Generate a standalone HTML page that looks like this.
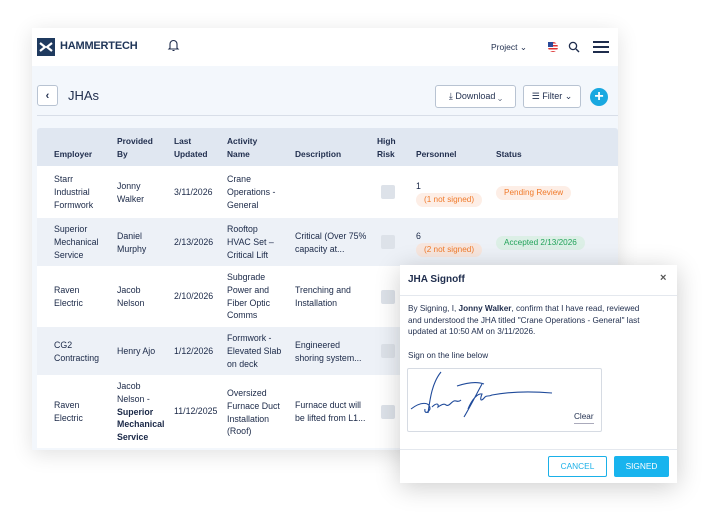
<!DOCTYPE html>
<html><head><style>
*{box-sizing:border-box;margin:0;padding:0}
body{width:709px;height:519px;background:#fff;font-family:"Liberation Sans",sans-serif;color:#1f2d4d;position:relative;overflow:hidden;font-size:8.6px}
.card{position:absolute;left:32px;top:28px;width:586px;height:422px;background:#f3f7fc;box-shadow:0 4px 20px rgba(0,0,0,.12);overflow:hidden}
.hdr{position:absolute;left:0;top:0;width:586px;height:38px;background:#fff}
.abs{position:absolute}
.btn{position:absolute;border:1px solid #b8c3d2;border-radius:3px;background:#fff;font-size:9px;display:flex;align-items:center;justify-content:center;gap:4px}
.th{position:absolute;top:100px;left:5px;width:581px;height:38px;background:#e0e7f1;border-radius:3px 3px 0 0}
.th span{position:absolute;font-weight:bold;font-size:8.4px;line-height:12.5px}
.row{position:absolute;left:5px;width:581px}
.c{position:absolute;line-height:12.8px;font-size:8.8px;color:#1a2847}
.cb{position:absolute;left:344px;width:14px;height:14px;background:#dde2e9;border-radius:2px}
.pill{position:absolute;border-radius:8px;font-size:8.2px;padding:2px 8px;line-height:10px}
.modal{position:absolute;left:400px;top:265px;width:277px;height:218px;background:#fff;box-shadow:0 4px 24px rgba(0,0,0,.2)}
</style></head><body>
<div class="card">
 <div class="hdr">
  <svg class="abs" style="left:5px;top:10px" width="18" height="18" viewBox="0 0 18 18"><rect width="18" height="18" fill="#1f3a5f"/><path d="M3 5l5 4-5 4M15 5l-5 4 5 4" stroke="#fff" stroke-width="2.2" fill="none"/></svg>
  <div class="abs" style="left:28px;top:12px;font-weight:bold;font-size:11px;color:#1f3558;letter-spacing:-.2px">HAMMERTECH</div>
  <svg class="abs" style="left:135px;top:10px" width="13" height="14" viewBox="0 0 13 14"><path d="M3 10V6a3.5 3.5 0 017 0v4l1 1H2z M5.5 12.5h2" stroke="#1f2d4d" stroke-width="1.1" fill="none"/></svg>
  <div class="abs" style="left:459px;top:14px;font-size:8.5px">Project ⌄</div>
  <div class="abs" style="left:516px;top:14px;width:10px;height:10px;border-radius:50%;background:repeating-linear-gradient(#d33 0 1.5px,#fff 1.5px 3px)"><div style="width:5px;height:5px;background:#2a4a9a"></div></div>
  <svg class="abs" style="left:536px;top:13px" width="12" height="12"><circle cx="5" cy="5" r="3.6" stroke="#1f2d4d" stroke-width="1.3" fill="none"/><path d="M8 8l3 3" stroke="#1f2d4d" stroke-width="1.4"/></svg>
  <div class="abs" style="left:561px;top:13px;width:16px;height:12px;border-top:2px solid #1f2d4d;border-bottom:2px solid #1f2d4d"><div style="margin-top:3px;height:2px;background:#1f2d4d"></div></div>
 </div>
 <div class="btn" style="left:5px;top:57px;width:21px;height:21px;font-size:11px;font-weight:bold">‹</div>
 <div class="abs" style="left:36px;top:60px;font-size:13px">JHAs</div>
 <div class="btn" style="left:403px;top:57px;width:81px;height:23px">⤓ Download ⌄</div>
 <div class="btn" style="left:491px;top:57px;width:58px;height:23px">☰ Filter ⌄</div>
 <div class="abs" style="left:558px;top:60px;width:18px;height:18px;border-radius:50%;background:#19a8e0;color:#fff;font-size:16px;font-weight:bold;text-align:center;line-height:18px">+</div>
 <div class="abs" style="left:5px;top:87px;width:581px;height:1px;background:#d8dee8"></div>
 <div class="th">
  <span style="left:17px;top:20px">Employer</span>
  <span style="left:80px;top:7px">Provided<br>By</span>
  <span style="left:137px;top:7px">Last<br>Updated</span>
  <span style="left:190px;top:7px">Activity<br>Name</span>
  <span style="left:258px;top:20px">Description</span>
  <span style="left:340px;top:7px">High<br>Risk</span>
  <span style="left:379px;top:20px">Personnel</span>
  <span style="left:459px;top:20px">Status</span>
 </div>
 <div class="row" style="top:138px;height:52px;background:#fff">
  <div class="c" style="left:17px;top:7px">Starr<br>Industrial<br>Formwork</div>
  <div class="c" style="left:80px;top:14px">Jonny<br>Walker</div>
  <div class="c" style="left:137px;top:20px">3/11/2026</div>
  <div class="c" style="left:190px;top:7px">Crane<br>Operations -<br>General</div>
  <div class="cb" style="top:19px"></div>
  <div class="c" style="left:379px;top:14px">1</div>
  <div class="pill" style="left:379px;top:27px;background:#fdeee6;color:#f07a2a">(1 not signed)</div>
  <div class="pill" style="left:459px;top:20px;background:#fdeee6;color:#f07a2a">Pending Review</div>
 </div>
 <div class="row" style="top:190px;height:48px;background:#edf1f7">
  <div class="c" style="left:17px;top:5px">Superior<br>Mechanical<br>Service</div>
  <div class="c" style="left:80px;top:12px">Daniel<br>Murphy</div>
  <div class="c" style="left:137px;top:18px">2/13/2026</div>
  <div class="c" style="left:190px;top:5px">Rooftop<br>HVAC Set –<br>Critical Lift</div>
  <div class="c" style="left:258px;top:12px">Critical (Over 75%<br>capacity at...</div>
  <div class="cb" style="top:17px"></div>
  <div class="c" style="left:379px;top:12px">6</div>
  <div class="pill" style="left:379px;top:25px;background:#f7e6de;color:#f07a2a">(2 not signed)</div>
  <div class="pill" style="left:459px;top:18px;background:#dcefe6;color:#22a35a">Accepted 2/13/2026</div>
 </div>
 <div class="row" style="top:238px;height:61px;background:#fff">
  <div class="c" style="left:17px;top:18px">Raven<br>Electric</div>
  <div class="c" style="left:80px;top:18px">Jacob<br>Nelson</div>
  <div class="c" style="left:137px;top:24px">2/10/2026</div>
  <div class="c" style="left:190px;top:5px">Subgrade<br>Power and<br>Fiber Optic<br>Comms</div>
  <div class="c" style="left:258px;top:18px">Trenching and<br>Installation</div>
  <div class="cb" style="top:24px"></div>
 </div>
 <div class="row" style="top:299px;height:48px;background:#edf1f7">
  <div class="c" style="left:17px;top:12px">CG2<br>Contracting</div>
  <div class="c" style="left:80px;top:18px">Henry Ajo</div>
  <div class="c" style="left:137px;top:18px">1/12/2026</div>
  <div class="c" style="left:190px;top:5px">Formwork -<br>Elevated Slab<br>on deck</div>
  <div class="c" style="left:258px;top:12px">Engineered<br>shoring system...</div>
  <div class="cb" style="top:17px"></div>
 </div>
 <div class="row" style="top:347px;height:73px;background:#fff">
  <div class="c" style="left:17px;top:24px">Raven<br>Electric</div>
  <div class="c" style="left:80px;top:5px">Jacob<br>Nelson -<br><b>Superior<br>Mechanical<br>Service</b></div>
  <div class="c" style="left:137px;top:30px">11/12/2025</div>
  <div class="c" style="left:190px;top:12px">Oversized<br>Furnace Duct<br>Installation<br>(Roof)</div>
  <div class="c" style="left:258px;top:24px">Furnace duct will<br>be lifted from L1...</div>
  <div class="cb" style="top:30px"></div>
 </div>
</div>
<div class="modal">
 <div class="abs" style="left:8px;top:9px;font-weight:bold;font-size:10px">JHA Signoff</div>
 <div class="abs" style="left:260px;top:7px;font-size:11px;font-weight:bold;color:#555">×</div>
 <div class="abs" style="left:0;top:30px;width:277px;height:1px;background:#e4e8ee"></div>
 <div class="abs" style="left:8px;top:38px;font-size:8.2px;line-height:11.7px;white-space:nowrap">By Signing, I, <b>Jonny Walker</b>, confirm that I have read, reviewed<br>and understood the JHA titled "Crane Operations - General" last<br>updated at 10:50 AM on 3/11/2026.</div>
 <div class="abs" style="left:8px;top:86px;font-size:8.2px">Sign on the line below</div>
 <div class="abs" style="left:7px;top:103px;width:195px;height:64px;border:1px solid #d6dbe3;border-radius:2px">
  <svg width="195" height="64" viewBox="0 0 195 64"><path d="M33 3C24 14 22 30 20 44M3 40C12 33 22 32 22 40C20 44 16 45 17 40M24 38C28 34 31 34 30 38C33 36 36 34 38 36C41 38 43 33 46 32C48 31 50 34 53 31M49 17C58 14 68 12 76 15M74 15C68 26 62 38 56 48M60 40C64 30 70 24 74 25C72 30 72 34 77 28C79 26 80 28 84 26C100 23 120 22 144 24" stroke="#1f4a9a" stroke-width="1.1" fill="none"/></svg>
  <div class="abs" style="left:166px;top:43px;font-size:8.2px;border-bottom:1px solid #aab;padding-bottom:2px">Clear</div>
 </div>
 <div class="abs" style="left:0;top:184px;width:277px;height:1px;background:#e4e8ee"></div>
 <div class="abs" style="left:148px;top:191px;width:59px;height:21px;border:1px solid #1ab0e8;border-radius:2px;color:#1ab0e8;font-size:8.3px;text-align:center;line-height:19px">CANCEL</div>
 <div class="abs" style="left:214px;top:191px;width:55px;height:21px;background:#18b4ee;border-radius:2px;color:#fff;font-size:8.3px;text-align:center;line-height:21px">SIGNED</div>
</div>
</body></html>
